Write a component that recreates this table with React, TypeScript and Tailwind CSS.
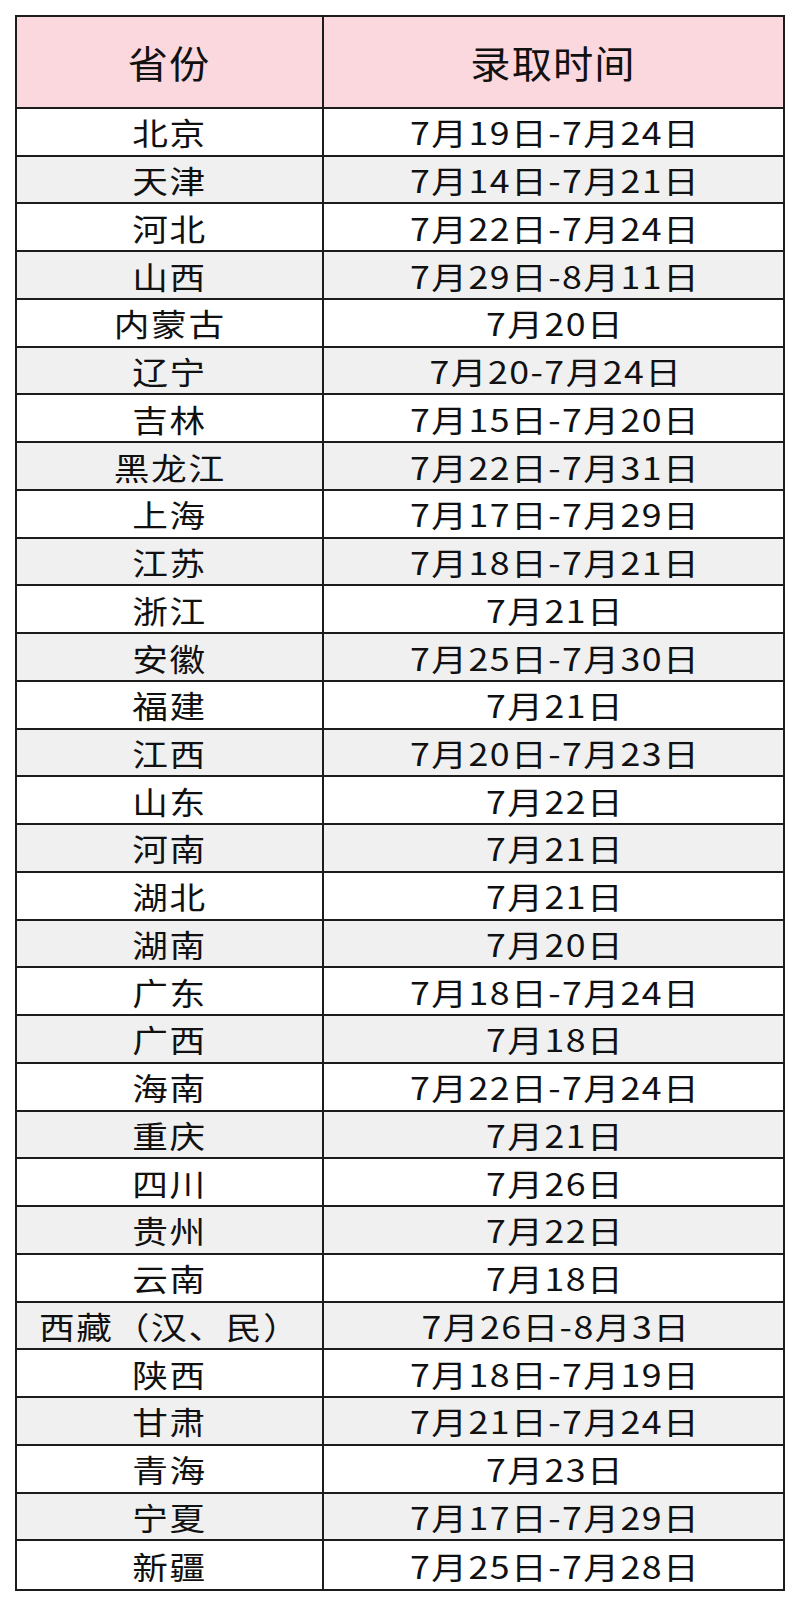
const rows: [string, string][] = [
  ["北京", "7月19日-7月24日"],
  ["天津", "7月14日-7月21日"],
  ["河北", "7月22日-7月24日"],
  ["山西", "7月29日-8月11日"],
  ["内蒙古", "7月20日"],
  ["辽宁", "7月20-7月24日"],
  ["吉林", "7月15日-7月20日"],
  ["黑龙江", "7月22日-7月31日"],
  ["上海", "7月17日-7月29日"],
  ["江苏", "7月18日-7月21日"],
  ["浙江", "7月21日"],
  ["安徽", "7月25日-7月30日"],
  ["福建", "7月21日"],
  ["江西", "7月20日-7月23日"],
  ["山东", "7月22日"],
  ["河南", "7月21日"],
  ["湖北", "7月21日"],
  ["湖南", "7月20日"],
  ["广东", "7月18日-7月24日"],
  ["广西", "7月18日"],
  ["海南", "7月22日-7月24日"],
  ["重庆", "7月21日"],
  ["四川", "7月26日"],
  ["贵州", "7月22日"],
  ["云南", "7月18日"],
  ["西藏（汉、民）", "7月26日-8月3日"],
  ["陕西", "7月18日-7月19日"],
  ["甘肃", "7月21日-7月24日"],
  ["青海", "7月23日"],
  ["宁夏", "7月17日-7月29日"],
  ["新疆", "7月25日-7月28日"],
];

const font = { fontFamily: '"Noto Sans CJK SC", "Noto Sans", sans-serif' };

export default function App() {
  return (
    <div className="w-[800px] h-[1605px] bg-white pt-[15px] pl-[15px]" style={font}>
      <div className="w-[770px] h-[1576px] flex flex-col border-2 border-[#1c1c1c] text-[#111]">
        <div className="h-[92px] grid grid-cols-[307px_1fr] bg-[#fad8dd] border-b-2 border-[#1c1c1c]">
          <div className="flex items-center justify-center border-r-2 border-[#1c1c1c]">
            <span className="inline-block text-[38px] leading-none scale-x-[1.06] tracking-[1px]">省份</span>
          </div>
          <div className="flex items-center justify-center">
            <span className="inline-block text-[38px] leading-none scale-x-[1.06] tracking-[1px]">录取时间</span>
          </div>
        </div>
        <div className="flex-1 grid grid-rows-[repeat(31,1fr)]">
          {rows.map(([name, date], i) => (
            <div
              key={name}
              className={`grid grid-cols-[307px_1fr] ${i % 2 === 1 ? "bg-[#f0f0f0]" : "bg-white"} ${
                i < rows.length - 1 ? "border-b-2 border-[#1c1c1c]" : ""
              }`}
            >
              <div className="flex items-center justify-center border-r-2 border-[#1c1c1c]">
                <span className="inline-block text-[31px] leading-none scale-x-[1.15] tracking-[1.5px]">{name}</span>
              </div>
              <div className="flex items-center justify-center pl-[4px]">
                <span className="inline-block text-[31px] leading-none scale-x-[1.15] tracking-[1.3px]">{date}</span>
              </div>
            </div>
          ))}
        </div>
      </div>
    </div>
  );
}
